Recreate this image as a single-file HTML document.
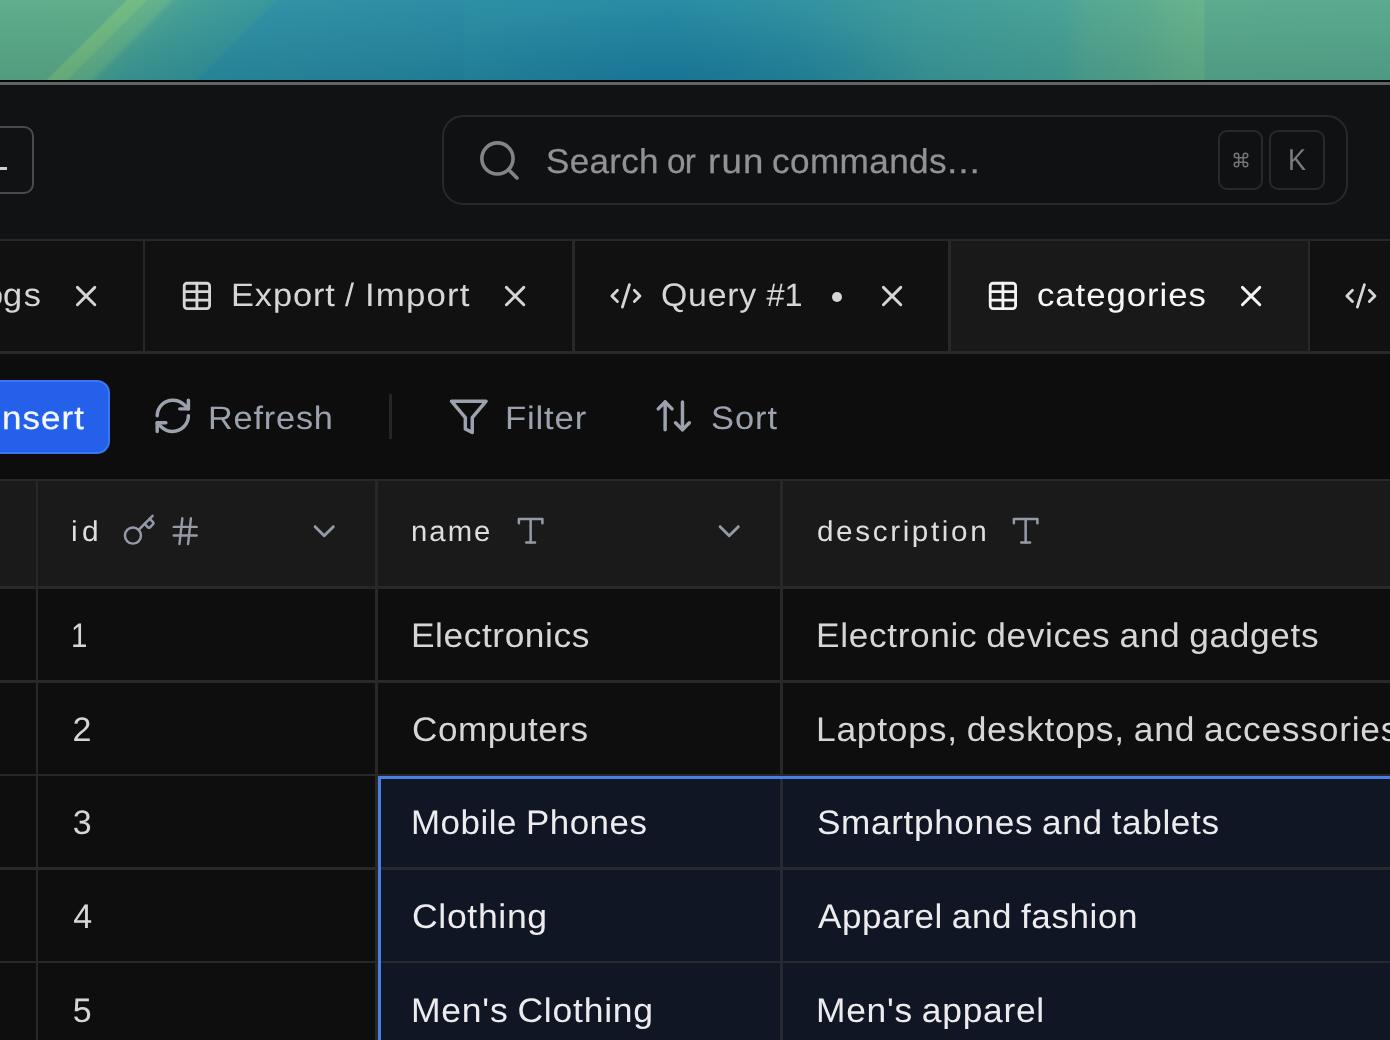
<!DOCTYPE html>
<html><head><meta charset="utf-8"><title>categories</title>
<style>
html,body{margin:0;padding:0;background:#0e0e0e;}
body{width:1390px;height:1040px;position:relative;overflow:hidden;font-family:"Liberation Sans",sans-serif;}
.t{position:absolute;white-space:nowrap;line-height:40px;text-rendering:geometricPrecision;transform-origin:0 0;font-family:"Liberation Sans",sans-serif;}
.wall{position:absolute;left:0;top:0;width:1390px;height:81px;overflow:hidden;
background:linear-gradient(90deg,#278ca2 464px,#2388a2 670px,#2b8f9e 800px,#3c9a98 928px,#45a095 1062px,#4fa591 1084px,#57a98d 1140px,#60af8a 1176px,#64b189 1203px,#57a98c 1206px,#56a88c 1390px);}
.wall i{position:absolute;display:block;}
.wl{left:0;top:0;width:464px;height:81px;background:linear-gradient(135deg,#5aab88 0.0px,#5aab87 88.4px,#72ba80 91.2px,#6eb882 103.2px,#61b087 105.4px,#5bad8a 119.5px,#46a192 125.2px,#3f9c95 141.4px,#33959a 193.7px,#2b8fa2 198.0px,#288ba2 282.8px,#2488a1 384.7px);}
.wr{left:300px;top:0;width:800px;height:81px;background:radial-gradient(ellipse 260px 75px at 372px 78px,rgba(24,124,160,.7),rgba(24,124,160,0));}
.wv{left:0;top:0;width:1390px;height:81px;background:linear-gradient(180deg,rgba(255,255,255,.03),rgba(0,20,40,.10));}
#root{position:absolute;left:0;top:0;width:1390px;height:1040px;overflow:hidden;will-change:transform;}
</style></head><body><div id="root">
<div class="wall"><i class="wl"></i><i class="wr"></i><i class="wv"></i></div>
<div style="position:absolute;left:0px;top:80.4px;width:1390px;height:1.6px;background:#050505;"></div>
<div style="position:absolute;left:0px;top:82px;width:1390px;height:3.1px;background:#5f6567;"></div>
<div style="position:absolute;left:0px;top:85px;width:1390px;height:154px;background:#111214;"></div>
<div style="position:absolute;left:-20px;top:125.9px;width:53.8px;height:68.2px;box-sizing:border-box;border:2.8px solid #4b4b4d;border-radius:10px;"></div>
<div style="position:absolute;left:0px;top:166.7px;width:7px;height:3.4px;background:#cfcfcf;"></div>
<div style="position:absolute;left:442.2px;top:114.6px;width:906px;height:90.6px;box-sizing:border-box;border:2.6px solid #28292b;border-radius:21px;background:#101113;"></div>
<svg style="position:absolute;left:475.55px;top:136.55px" width="46.8" height="46.8" viewBox="0 0 24 24" fill="none" stroke="#848485" stroke-width="1.85" stroke-linecap="round" stroke-linejoin="round"><circle cx="11" cy="11" r="8"/><path d="m21 21-4.3-4.3"/></svg>
<span class="t" style="left:546.28px;top:142px;font-size:34.5px;letter-spacing:0.275px;color:#929293;transform:scaleX(1.0159);-webkit-text-stroke:0.25px #929293;">Search</span>
<span class="t" style="left:667.07px;top:142px;font-size:34.5px;letter-spacing:-0.813px;color:#929293;transform:scaleX(0.9657);-webkit-text-stroke:0.25px #929293;">or</span>
<span class="t" style="left:708.01px;top:142px;font-size:34.5px;letter-spacing:1.162px;color:#929293;transform:scaleX(1.0629);-webkit-text-stroke:0.25px #929293;">run</span>
<span class="t" style="left:771.90px;top:142px;font-size:34.5px;letter-spacing:0.372px;color:#929293;transform:scaleX(1.0192);-webkit-text-stroke:0.25px #929293;">commands</span>
<span class="t" style="left:947.20px;top:142px;font-size:34.5px;letter-spacing:0.798px;color:#929293;transform:scaleX(1.0873);-webkit-text-stroke:0.25px #929293;">...</span>
<div style="position:absolute;left:1218px;top:130.2px;width:44.8px;height:59.8px;box-sizing:border-box;border:2.6px solid #28292b;border-radius:9px;"></div>
<div style="position:absolute;left:1269px;top:130.2px;width:56px;height:59.8px;box-sizing:border-box;border:2.6px solid #28292b;border-radius:9px;"></div>
<svg style="position:absolute;left:1231.5px;top:150.6px" width="18" height="18" viewBox="0 0 24 24" fill="none" stroke="#747475" stroke-width="2" stroke-linecap="round" stroke-linejoin="round"><path d="M15 6v12a3 3 0 1 0 3-3H6a3 3 0 1 0 3 3V6a3 3 0 1 0-3 3h12a3 3 0 1 0-3-3"/></svg>
<span class="t" style="left:1287.86px;top:141px;font-size:30px;letter-spacing:0.000px;color:#7b7b7c;transform:scaleX(0.9000);">K</span>
<div style="position:absolute;left:0px;top:238.5px;width:1390px;height:2.6px;background:#282829;"></div>
<div style="position:absolute;left:0px;top:241.1px;width:1390px;height:110.3px;background:#111111;"></div>
<div style="position:absolute;left:950.8px;top:241.1px;width:357px;height:110.3px;background:#191919;"></div>
<div style="position:absolute;left:0px;top:351.4px;width:1390px;height:2.6px;background:#282829;"></div>
<div style="position:absolute;left:142.8px;top:241.1px;width:2.6px;height:110.3px;background:#282829;"></div>
<div style="position:absolute;left:572.2px;top:241.1px;width:2.6px;height:110.3px;background:#282829;"></div>
<div style="position:absolute;left:948.2px;top:241.1px;width:2.6px;height:110.3px;background:#282829;"></div>
<div style="position:absolute;left:1307.8px;top:241.1px;width:2.6px;height:110.3px;background:#282829;"></div>
<span class="t" style="left:2.98px;top:275px;font-size:32.5px;letter-spacing:1.488px;color:#d6d6d6;transform:scaleX(1.0571);">gs</span>
<span class="t" style="left:-15.05px;top:275px;font-size:32.5px;letter-spacing:0.000px;color:#d6d6d6;transform:scaleX(1.0000);">o</span>
<svg style="position:absolute;left:72.90px;top:283.10px" width="26.2" height="26.2" viewBox="-13.1 -13.1 26.2 26.2" fill="none" stroke="#d6d6d6" stroke-width="2.9" stroke-linecap="round"><path d="M-8.7 -8.7L8.7 8.7M8.7 -8.7L-8.7 8.7"/></svg>
<svg style="position:absolute;left:179.90px;top:279.10px" width="33.8" height="33.8" viewBox="0 0 24 24" fill="none" stroke="#d6d6d6" stroke-width="2" stroke-linecap="round" stroke-linejoin="round"><path d="M12 3v18"/><rect width="18" height="18" x="3" y="3" rx="2"/><path d="M3 9h18"/><path d="M3 15h18"/></svg>
<span class="t" style="left:230.92px;top:275px;font-size:32.5px;letter-spacing:0.855px;color:#d6d6d6;transform:scaleX(1.0576);">Export</span>
<span class="t" style="left:345.20px;top:275px;font-size:32.5px;letter-spacing:0.000px;color:#d6d6d6;transform:scaleX(0.9973);">/</span>
<span class="t" style="left:364.68px;top:275px;font-size:32.5px;letter-spacing:1.051px;color:#d6d6d6;transform:scaleX(1.0726);">Import</span>
<svg style="position:absolute;left:502.10px;top:283.10px" width="26.2" height="26.2" viewBox="-13.1 -13.1 26.2 26.2" fill="none" stroke="#d6d6d6" stroke-width="2.9" stroke-linecap="round"><path d="M-8.7 -8.7L8.7 8.7M8.7 -8.7L-8.7 8.7"/></svg>
<svg style="position:absolute;left:608.90px;top:279.10px" width="33.8" height="33.8" viewBox="0 0 24 24" fill="none" stroke="#d6d6d6" stroke-width="2" stroke-linecap="round" stroke-linejoin="round"><path d="m18 16 4-4-4-4"/><path d="m6 8-4 4 4 4"/><path d="m14.5 4-5 16"/></svg>
<span class="t" style="left:660.54px;top:275px;font-size:32.5px;letter-spacing:0.738px;color:#d6d6d6;transform:scaleX(1.0416);">Query</span>
<span class="t" style="left:766.48px;top:275px;font-size:32.5px;letter-spacing:0.000px;color:#d6d6d6;transform:scaleX(1.0000);">#1</span>
<div style="position:absolute;left:832.2px;top:292.2px;width:10px;height:10px;border-radius:50%;background:#d6d6d6"></div>
<svg style="position:absolute;left:879.10px;top:283.10px" width="26.2" height="26.2" viewBox="-13.1 -13.1 26.2 26.2" fill="none" stroke="#d6d6d6" stroke-width="2.9" stroke-linecap="round"><path d="M-8.7 -8.7L8.7 8.7M8.7 -8.7L-8.7 8.7"/></svg>
<svg style="position:absolute;left:985.90px;top:279.10px" width="33.8" height="33.8" viewBox="0 0 24 24" fill="none" stroke="#f4f4f4" stroke-width="2" stroke-linecap="round" stroke-linejoin="round"><path d="M12 3v18"/><rect width="18" height="18" x="3" y="3" rx="2"/><path d="M3 9h18"/><path d="M3 15h18"/></svg>
<span class="t" style="left:1036.53px;top:275px;font-size:32.5px;letter-spacing:0.904px;color:#f7f7f7;transform:scaleX(1.0679);">categories</span>
<svg style="position:absolute;left:1237.50px;top:283.10px" width="26.2" height="26.2" viewBox="-13.1 -13.1 26.2 26.2" fill="none" stroke="#f4f4f4" stroke-width="2.9" stroke-linecap="round"><path d="M-8.7 -8.7L8.7 8.7M8.7 -8.7L-8.7 8.7"/></svg>
<svg style="position:absolute;left:1344.10px;top:279.10px" width="33.8" height="33.8" viewBox="0 0 24 24" fill="none" stroke="#d6d6d6" stroke-width="2" stroke-linecap="round" stroke-linejoin="round"><path d="m18 16 4-4-4-4"/><path d="m6 8-4 4 4 4"/><path d="m14.5 4-5 16"/></svg>
<div style="position:absolute;left:0px;top:354px;width:1390px;height:124.8px;background:#0d0d0d;"></div>
<div style="position:absolute;left:-30px;top:379.8px;width:140.4px;height:73.8px;box-sizing:border-box;border-radius:13px;background:#2460e9;border:2px solid #3d76f2;"></div>
<span class="t" style="left:1.52px;top:398px;font-size:32.5px;letter-spacing:1.042px;color:#f6f8ff;transform:scaleX(1.0732);-webkit-text-stroke:0.25px #f6f8ff;">nsert</span>
<svg style="position:absolute;left:151.9px;top:395.2px" width="41.6" height="41.6" viewBox="0 0 24 24" fill="none" stroke="#9ca2ad" stroke-width="2" stroke-linecap="round" stroke-linejoin="round"><path d="M3 12a9 9 0 0 1 9-9 9.75 9.75 0 0 1 6.74 2.74L21 8"/><path d="M21 3v5h-5"/><path d="M21 12a9 9 0 0 1-9 9 9.75 9.75 0 0 1-6.74-2.74L3 16"/><path d="M8 16H3v5"/></svg>
<span class="t" style="left:207.93px;top:398px;font-size:32.5px;letter-spacing:0.794px;color:#9ca2ad;transform:scaleX(1.0536);">Refresh</span>
<div style="position:absolute;left:388.9px;top:393.9px;width:2.8px;height:44.7px;background:#262628;"></div>
<svg style="position:absolute;left:448.2px;top:396.2px" width="41.6" height="41.6" viewBox="0 0 24 24" fill="none" stroke="#9ca2ad" stroke-width="2" stroke-linecap="round" stroke-linejoin="round"><polygon points="22 3 2 3 10 12.46 10 19 14 21 14 12.46 22 3"/></svg>
<span class="t" style="left:504.59px;top:398px;font-size:32.5px;letter-spacing:0.772px;color:#9ca2ad;transform:scaleX(1.0687);">Filter</span>
<svg style="position:absolute;left:653.2px;top:395.4px" width="41.6" height="41.6" viewBox="0 0 24 24" fill="none" stroke="#9ca2ad" stroke-width="2" stroke-linecap="round" stroke-linejoin="round"><path d="m21 16-4 4-4-4"/><path d="M17 20V4"/><path d="m3 8 4-4 4 4"/><path d="M7 4v16"/></svg>
<span class="t" style="left:710.85px;top:398px;font-size:32.5px;letter-spacing:0.915px;color:#9ca2ad;transform:scaleX(1.0580);">Sort</span>
<div style="position:absolute;left:0px;top:478.8px;width:1390px;height:2.6px;background:#282829;"></div>
<div style="position:absolute;left:0px;top:481.4px;width:1390px;height:105px;background:#1a1a1a;"></div>
<div style="position:absolute;left:0px;top:586.4px;width:1390px;height:2.6px;background:#282829;"></div>
<div style="position:absolute;left:0px;top:589.0px;width:1390px;height:91px;background:#0e0e0e;"></div>
<div style="position:absolute;left:0px;top:680.0px;width:1390px;height:2.6px;background:#282829;"></div>
<div style="position:absolute;left:0px;top:682.6px;width:1390px;height:91px;background:#0e0e0e;"></div>
<div style="position:absolute;left:0px;top:773.6px;width:1390px;height:2.6px;background:#282829;"></div>
<div style="position:absolute;left:0px;top:776.2px;width:1390px;height:91px;background:#0e0e0e;"></div>
<div style="position:absolute;left:0px;top:867.2px;width:1390px;height:2.6px;background:#282829;"></div>
<div style="position:absolute;left:0px;top:869.8px;width:1390px;height:91px;background:#0e0e0e;"></div>
<div style="position:absolute;left:0px;top:960.8px;width:1390px;height:2.6px;background:#282829;"></div>
<div style="position:absolute;left:0px;top:963.4px;width:1390px;height:91px;background:#0e0e0e;"></div>
<div style="position:absolute;left:0px;top:1054.4px;width:1390px;height:2.6px;background:#282829;"></div>
<div style="position:absolute;left:378px;top:776.2px;width:1012px;height:300px;background:#101624;"></div>
<div style="position:absolute;left:378px;top:867.2px;width:1012px;height:2.6px;background:#272930;"></div>
<div style="position:absolute;left:378px;top:960.8px;width:1012px;height:2.6px;background:#272930;"></div>
<div style="position:absolute;left:378px;top:1054.4px;width:1012px;height:2.6px;background:#272930;"></div>
<div style="position:absolute;left:35.6px;top:481.4px;width:2.6px;height:600px;background:#282829;"></div>
<div style="position:absolute;left:375.2px;top:481.4px;width:2.6px;height:600px;background:#282829;"></div>
<div style="position:absolute;left:780.2px;top:481.4px;width:2.6px;height:600px;background:#282829;"></div>
<div style="position:absolute;left:780.2px;top:779px;width:2.6px;height:300px;background:#262931;"></div>
<div style="position:absolute;left:378px;top:775.8px;width:1012px;height:3.4px;background:#4a80e4;"></div>
<div style="position:absolute;left:378px;top:775.8px;width:3.2px;height:300px;background:#4a80e4;"></div>
<span class="t" style="left:70.96px;top:512px;font-size:28.8px;letter-spacing:4.132px;color:#dedede;transform:scaleX(1.0358);">id</span>
<span class="t" style="left:411.30px;top:512px;font-size:28.8px;letter-spacing:2.039px;color:#dedede;transform:scaleX(1.0152);">name</span>
<span class="t" style="left:816.84px;top:512px;font-size:28.8px;letter-spacing:2.536px;color:#dedede;transform:scaleX(1.0306);">description</span>
<svg style="position:absolute;left:122.40px;top:513.10px" width="35.0" height="35.0" viewBox="0 0 24 24" fill="none" stroke="#949aa7" stroke-width="1.7" stroke-linecap="round" stroke-linejoin="round"><path d="m15.5 7.5 2.3 2.3a1 1 0 0 0 1.4 0l2.1-2.1a1 1 0 0 0 0-1.4L19 4"/><path d="m21 2-9.6 9.6"/><circle cx="7.5" cy="15.5" r="5.5"/></svg>
<svg style="position:absolute;left:168.30px;top:513.80px" width="34.4" height="34.4" viewBox="0 0 24 24" fill="none" stroke="#949aa7" stroke-width="1.7" stroke-linecap="round" stroke-linejoin="round"><line x1="4" x2="20" y1="9" y2="9"/><line x1="4" x2="20" y1="15" y2="15"/><line x1="10" x2="8" y1="3" y2="21"/><line x1="16" x2="14" y1="3" y2="21"/></svg>
<svg style="position:absolute;left:305.80px;top:513.30px" width="36.4" height="36.4" viewBox="0 0 24 24" fill="none" stroke="#949aa7" stroke-width="1.9" stroke-linecap="round" stroke-linejoin="round"><path d="m6 9 6 6 6-6"/></svg>
<svg style="position:absolute;left:513.35px;top:513.35px" width="35.3" height="35.3" viewBox="0 0 24 24" fill="none" stroke="#949aa7" stroke-width="1.7" stroke-linecap="round" stroke-linejoin="round"><polyline points="4 7 4 4 20 4 20 7"/><line x1="9" x2="15" y1="20" y2="20"/><line x1="12" x2="12" y1="4" y2="20"/></svg>
<svg style="position:absolute;left:711.40px;top:513.30px" width="36.4" height="36.4" viewBox="0 0 24 24" fill="none" stroke="#949aa7" stroke-width="1.9" stroke-linecap="round" stroke-linejoin="round"><path d="m6 9 6 6 6-6"/></svg>
<svg style="position:absolute;left:1007.75px;top:513.35px" width="35.3" height="35.3" viewBox="0 0 24 24" fill="none" stroke="#949aa7" stroke-width="1.7" stroke-linecap="round" stroke-linejoin="round"><polyline points="4 7 4 4 20 4 20 7"/><line x1="9" x2="15" y1="20" y2="20"/><line x1="12" x2="12" y1="4" y2="20"/></svg>
<span class="t" style="left:71.03px;top:616px;font-size:34px;letter-spacing:0.000px;color:#d6d6d6;transform:scaleX(0.8678);">1</span>
<span class="t" style="left:410.74px;top:616px;font-size:34px;letter-spacing:0.526px;color:#d6d6d6;transform:scaleX(1.0397);">Electronics</span>
<span class="t" style="left:815.55px;top:616px;font-size:34px;letter-spacing:0.628px;word-spacing:-1.395px;color:#d6d6d6;transform:scaleX(1.0369);">Electronic devices and gadgets</span>
<span class="t" style="left:72.38px;top:710px;font-size:34px;letter-spacing:0.000px;color:#d6d6d6;transform:scaleX(1.0000);">2</span>
<span class="t" style="left:411.92px;top:710px;font-size:34px;letter-spacing:0.537px;color:#d6d6d6;transform:scaleX(1.0322);">Computers</span>
<span class="t" style="left:815.53px;top:710px;font-size:34px;letter-spacing:0.695px;word-spacing:-1.504px;color:#d6d6d6;transform:scaleX(1.0419);">Laptops, desktops, and accessories</span>
<span class="t" style="left:72.75px;top:803px;font-size:34px;letter-spacing:0.000px;color:#d6d6d6;transform:scaleX(1.0000);">3</span>
<span class="t" style="left:410.78px;top:803px;font-size:34px;letter-spacing:0.502px;word-spacing:-1.185px;color:#ececee;transform:scaleX(1.0268);">Mobile Phones</span>
<span class="t" style="left:816.85px;top:803px;font-size:34px;letter-spacing:0.604px;word-spacing:-1.352px;color:#ececee;transform:scaleX(1.0346);">Smartphones and tablets</span>
<span class="t" style="left:73.25px;top:897px;font-size:34px;letter-spacing:0.000px;color:#d6d6d6;transform:scaleX(1.0000);">4</span>
<span class="t" style="left:411.90px;top:897px;font-size:34px;letter-spacing:0.641px;color:#ececee;transform:scaleX(1.0455);">Clothing</span>
<span class="t" style="left:818.40px;top:897px;font-size:34px;letter-spacing:0.559px;word-spacing:-1.274px;color:#ececee;transform:scaleX(1.0307);">Apparel and fashion</span>
<span class="t" style="left:72.75px;top:991px;font-size:34px;letter-spacing:0.000px;color:#d6d6d6;transform:scaleX(1.0000);">5</span>
<span class="t" style="left:410.73px;top:991px;font-size:34px;letter-spacing:0.730px;word-spacing:-1.561px;color:#ececee;transform:scaleX(1.0445);">Men's Clothing</span>
<span class="t" style="left:815.54px;top:991px;font-size:34px;letter-spacing:0.693px;word-spacing:-1.489px;color:#ececee;transform:scaleX(1.0403);">Men's apparel</span>
</div></body></html>
